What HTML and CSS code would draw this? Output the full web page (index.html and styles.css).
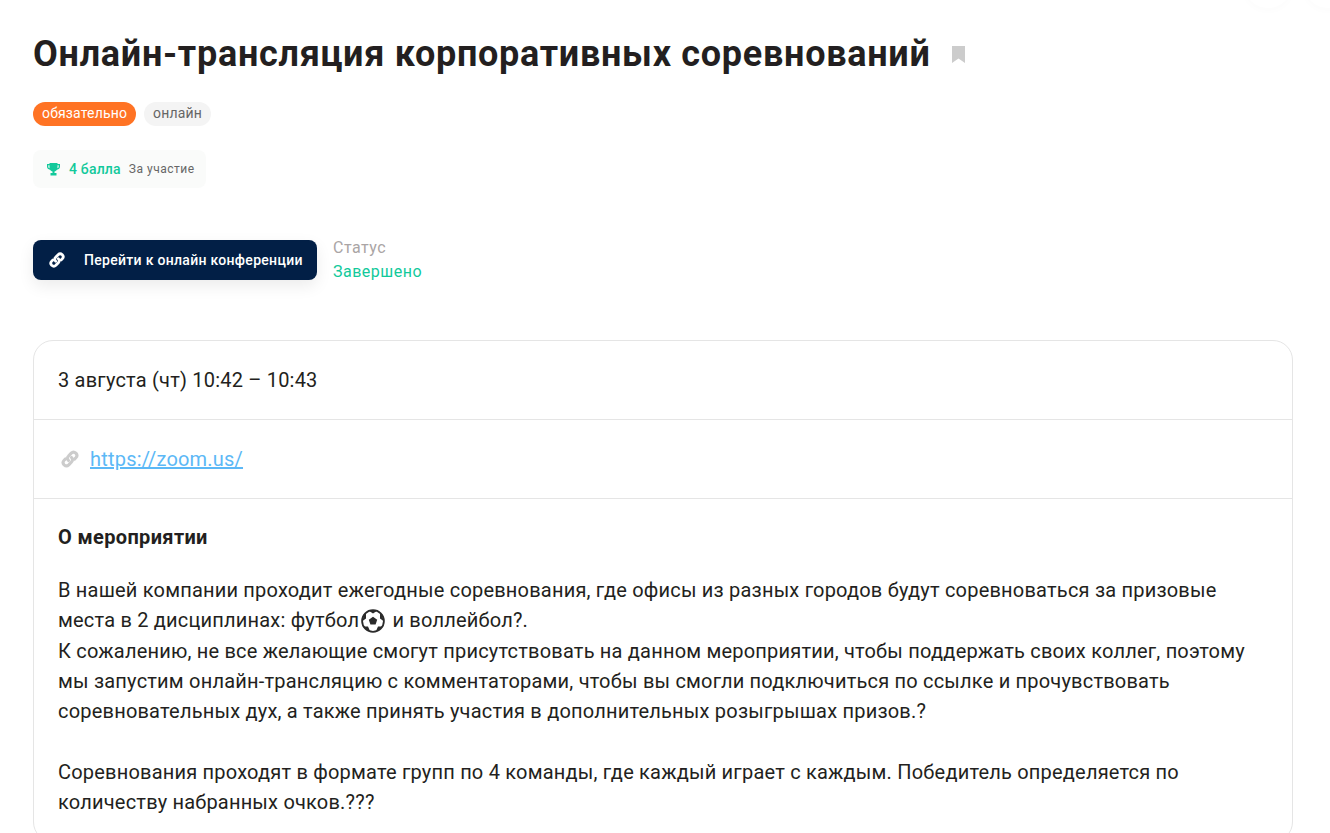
FILE: index.html
```html
<!DOCTYPE html>
<html>
  <head>
    <title>Онлайн-трансляция корпоративных соревнований</title>
    <link rel="stylesheet" href="styles.css">
  </head>
  <body>
    <div class="top-action top-action-first"></div>
    <div class="top-action top-action-second"></div>

    <div class="event-page">
      <div class="event-title-row">
        <h1 class="event-title">Онлайн-трансляция корпоративных соревнований</h1>
        <svg class="bookmark-icon" width="13" height="17" viewBox="0 0 13 17">
          <path d="M0 0H13V17L6.500 12.500L0 17Z" fill="#ccc"/>
        </svg>
      </div>

      <div class="tags">
        <span class="tag tag-required">обязательно</span>
        <span class="tag tag-online">онлайн</span>
      </div>

      <div class="points">
        <svg class="trophy-icon" width="13" height="13" viewBox="0 0 13 13">
          <path d="M2.500 0H10.500V1H13V3.500C13 5.200 11.700 6.500 10 6.700C9.500 7.600 8.600 8.200 7.500 8.400V10H9.500V12.500H3.500V10H5.500V8.400C4.400 8.200 3.500 7.600 3 6.700C1.300 6.500 0 5.200 0 3.500V1H2.500ZM1.300 2.300V3.500C1.300 4.400 1.800 5.100 2.600 5.300C2.500 4.800 2.500 4.300 2.500 3.800V2.300ZM11.700 2.300H10.500V3.800C10.500 4.300 10.500 4.800 10.400 5.300C11.200 5.100 11.700 4.400 11.700 3.500Z" fill="#12c99b"/>
        </svg>
        <span class="points-value">4 балла</span>
        <span class="points-label">За участие</span>
      </div>

      <div class="action-row">
        <a class="join-button" href="#">
          <svg class="link-icon" width="18" height="18" viewBox="0 0 16 16">
            <g fill="none" stroke="#fff" stroke-width="2.500" stroke-linecap="round">
              <path d="M6.800 9.200C5.700 8.100 5.800 6.600 6.800 5.600L9 3.300C10 2.300 11.600 2.300 12.700 3.300C13.700 4.400 13.700 6 12.700 7L11.600 8.100"/>
              <path d="M9.200 6.800C10.300 7.900 10.200 9.400 9.200 10.400L7 12.700C6 13.700 4.400 13.700 3.300 12.700C2.300 11.600 2.300 10 3.300 9L4.400 7.900"/>
            </g>
          </svg>
          <span>Перейти к онлайн конференции</span>
        </a>
        <div class="status">
          <div class="status-label">Статус</div>
          <div class="status-value">Завершено</div>
        </div>
      </div>

      <div class="event-card">
        <div class="card-row card-date">3 августа (чт) 10:42 – 10:43</div>
        <div class="card-row card-link-row">
          <svg class="link-icon" width="20" height="20" viewBox="0 0 16 16">
            <g fill="none" stroke="#ccc" stroke-width="2.500" stroke-linecap="round">
              <path d="M6.800 9.200C5.700 8.100 5.800 6.600 6.800 5.600L9 3.300C10 2.300 11.600 2.300 12.700 3.300C13.700 4.400 13.700 6 12.700 7L11.600 8.100"/>
              <path d="M9.200 6.800C10.300 7.900 10.200 9.400 9.200 10.400L7 12.700C6 13.700 4.400 13.700 3.300 12.700C2.300 11.600 2.300 10 3.300 9L4.400 7.900"/>
            </g>
          </svg>
          <a class="zoom-link" href="#">https://zoom.us/</a>
        </div>
        <div class="card-about">
          <h2 class="about-title">О мероприятии</h2>
          <p class="about-text">В нашей компании проходит ежегодные соревнования, где офисы из разных городов будут соревноваться за призовые места в 2 дисциплинах: футбол<svg class="ball-icon" width="24" height="24" viewBox="0 0 24 24">
              <circle cx="12" cy="12" r="10.900" fill="#fff" stroke="#2b2b2b" stroke-width="1.800"/>
              <path d="M12 7.800L16.200 10.800L14.600 15.600H9.400L7.800 10.800Z" fill="#2b2b2b"/>
              <path d="M7.500 1.500L12 4.500L16.500 1.500L14 1H10ZM1.500 12L5 9.500L5 4L3 5.500ZM22.500 12L19 9.500L19 4L21 5.500ZM2.500 17.500L7 17.500L9 22L5 20.500ZM21.500 17.500L17 17.500L15 22L19 20.500Z" fill="#2b2b2b"/>
            </svg> и воллейбол?.<br>К сожалению, не все желающие смогут присутствовать на данном мероприятии, чтобы поддержать своих коллег, поэтому мы запустим онлайн-трансляцию с комментаторами, чтобы вы смогли подключиться по ссылке и прочувствовать соревновательных дух, а также принять участия в дополнительных розыгрышах призов.?<br><br>Соревнования проходят в формате групп по 4 команды, где каждый играет с каждым. Победитель определяется по количеству набранных очков.???</p>
        </div>
      </div>
    </div>
  </body>
</html>
```

FILE: styles.css
```css
html, body {
  height: 833px;
  overflow: hidden;
}
body {
  margin: 0;
  font-family: Roboto, Arial, sans-serif;
  color: #231f20;
  background-color: #fff;
}
.top-action {
  position: absolute;
  top: -40px;
  width: 48px;
  height: 48px;
  border-radius: 50%;
  box-shadow: 0 2px 8px rgba(0, 0, 0, 0.02);
}
.top-action-first {
  left: 1244px;
}
.top-action-second {
  left: 1304px;
}
.event-page {
  width: 1260px;
  padding: 34px 0 0 33px;
}
.event-title-row {
  display: flex;
  align-items: center;
  height: 40px;
}
.event-title {
  margin: 0;
  font-size: 36px;
  line-height: 40px;
  font-weight: 700;
  letter-spacing: 0.72px;
}
.bookmark-icon {
  margin-left: 21px;
}
.tags {
  display: flex;
  gap: 8px;
  margin-top: 28px;
}
.tag {
  height: 24px;
  line-height: 23px;
  padding: 0 9px;
  border-radius: 12px;
  font-size: 14px;
  letter-spacing: 0.15px;
}
.tag-required {
  background-color: #ff7324;
  color: #fff;
}
.tag-online {
  background-color: #f4f4f4;
  color: #666;
}
.points {
  display: inline-flex;
  align-items: center;
  height: 38px;
  margin-top: 24px;
  padding: 0 11px 0 14px;
  border-radius: 8px;
  background-color: #fafbfa;
}
.trophy-icon {
  margin-right: 9px;
}
.points-value {
  font-size: 14px;
  font-weight: 500;
  color: #12c99b;
  letter-spacing: 0.2px;
}
.points-label {
  margin-left: 8px;
  font-size: 12px;
  color: #666;
  letter-spacing: 0.5px;
}
.action-row {
  display: flex;
  align-items: center;
  gap: 16px;
  margin-top: 48px;
}
.join-button {
  display: flex;
  align-items: center;
  width: 284px;
  height: 40px;
  box-sizing: border-box;
  padding-left: 15px;
  border-radius: 8px;
  background-color: #021f46;
  color: #fff;
  font-size: 14px;
  font-weight: 500;
  letter-spacing: 0.3px;
  text-decoration: none;
  box-shadow: 0 6px 16px rgba(0, 0, 0, 0.08);
}
.join-button span {
  margin-left: 18px;
}
.status {
  font-size: 16px;
  line-height: 24px;
  letter-spacing: 0.5px;
}
.status-label {
  color: #aaa5a5;
}
.status-value {
  color: #12c99b;
}
.event-card {
  margin-top: 56px;
  border: 1px solid #e5e5e5;
  border-radius: 20px;
}
.card-row {
  display: flex;
  align-items: center;
  height: 78px;
  padding: 0 24px;
  border-bottom: 1px solid #e5e5e5;
}
.card-date {
  font-size: 20px;
  letter-spacing: 0.2px;
}
.card-link-row .link-icon {
  margin-right: 10px;
  margin-left: 2px;
}
.zoom-link {
  font-size: 20px;
  letter-spacing: 0.2px;
  color: #5cb8f6;
}
.card-about {
  padding: 25px 24px 24px;
}
.about-title {
  margin: 0;
  font-size: 20px;
  line-height: 26px;
  font-weight: 700;
  letter-spacing: 0.35px;
}
.about-text {
  margin: 25px 0 0;
  font-size: 20px;
  line-height: 30.300px;
  letter-spacing: 0.2px;
}
.ball-icon {
  margin: 0 2px;
  vertical-align: -6px;
}
```
